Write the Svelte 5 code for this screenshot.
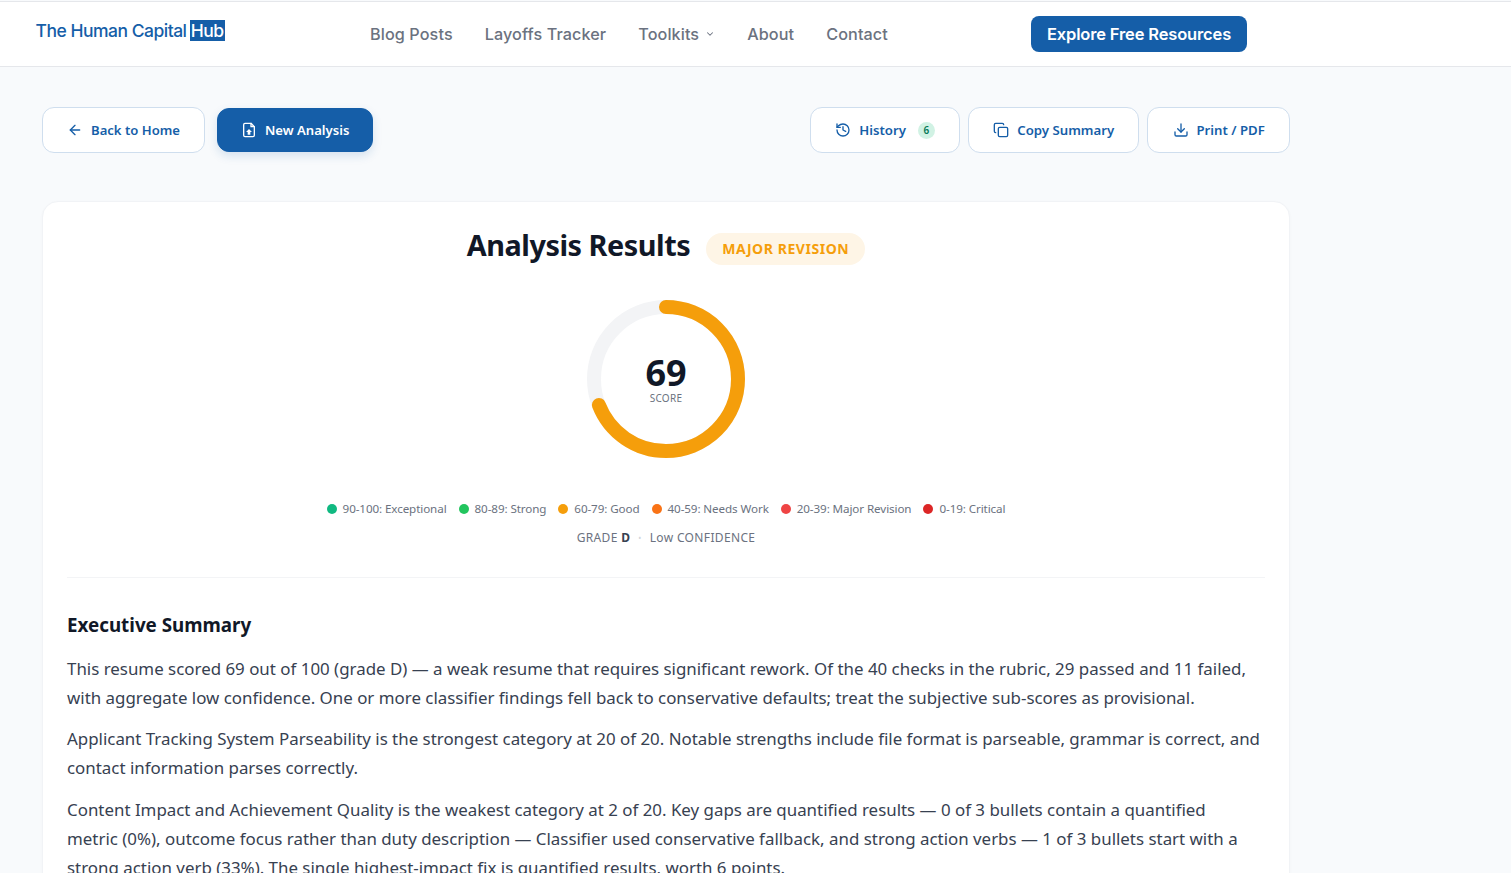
<script lang="ts">
	type Band = { label: string; color: string };

	const navLinks = ['Blog Posts', 'Layoffs Tracker', 'Toolkits', 'About', 'Contact'];

	const bands: Band[] = [
		{ label: '90-100: Exceptional', color: '#10b981' },
		{ label: '80-89: Strong', color: '#22c55e' },
		{ label: '60-79: Good', color: '#f59e0b' },
		{ label: '40-59: Needs Work', color: '#f97316' },
		{ label: '20-39: Major Revision', color: '#ef4444' },
		{ label: '0-19: Critical', color: '#dc2626' }
	];

	const score = 69;
	const radius = 72;
	const circumference = 2 * Math.PI * radius;
	const dash = (score / 100) * circumference;
</script>

<header class="site-header">
	<div class="logo">The Human Capital <span class="logo-hub">Hub</span></div>
	<nav class="site-nav">
		{#each navLinks as link}
			<a href="#top" class="nav-link">
				{link}
				{#if link === 'Toolkits'}
					<svg width="10" height="10" viewBox="0 0 24 24" fill="none" stroke="currentColor" stroke-width="2.5" stroke-linecap="round" stroke-linejoin="round"><path d="m6 9 6 6 6-6" /></svg>
				{/if}
			</a>
		{/each}
	</nav>
	<a href="#top" class="cta">Explore Free Resources</a>
</header>

<main class="page">
	<div class="toolbar">
		<div class="toolbar-group">
			<button class="btn">
				<svg class="icon" viewBox="0 0 24 24"><path d="M19 12H5" /><path d="m12 19-7-7 7-7" /></svg>
				Back to Home
			</button>
			<button class="btn primary">
				<svg class="icon" viewBox="0 0 24 24"><path d="M15 2H6a2 2 0 0 0-2 2v16a2 2 0 0 0 2 2h12a2 2 0 0 0 2-2V7z" /><path d="M15 2v5h5" /><path d="m12 10.5 4.5 4.5H14v4h-4v-4H7.500z" fill="currentColor" stroke="none" /></svg>
				New Analysis
			</button>
		</div>
		<div class="toolbar-group right">
			<button class="btn">
				<svg class="icon" viewBox="0 0 24 24"><path d="M3 12a9 9 0 1 0 9-9 9.75 9.75 0 0 0-6.74 2.74L3 8" /><path d="M3 3v5h5" /><path d="M12 7v5l4 2" /></svg>
				History
				<span class="count">6</span>
			</button>
			<button class="btn">
				<svg class="icon" viewBox="0 0 24 24"><rect x="8" y="8" width="14" height="14" rx="2" /><path d="M4 16c-1.100 0-2-.9-2-2V4c0-1.100.9-2 2-2h10c1.100 0 2 .9 2 2" /></svg>
				Copy Summary
			</button>
			<button class="btn">
				<svg class="icon" viewBox="0 0 24 24"><path d="M21 15v4a2 2 0 0 1-2 2H5a2 2 0 0 1-2-2v-4" /><path d="m7 10 5 5 5-5" /><path d="M12 15V3" /></svg>
				Print / PDF
			</button>
		</div>
	</div>

	<section class="card">
		<div class="title-row">
			<h1>Analysis Results</h1>
			<span class="verdict">MAJOR REVISION</span>
		</div>

		<div class="ring">
			<svg width="160" height="160" viewBox="0 0 160 160">
				<circle cx="80" cy="80" r={radius} fill="none" stroke="#f3f4f6" stroke-width="14" />
				<circle
					cx="80"
					cy="80"
					r={radius}
					fill="none"
					stroke="#f59e0b"
					stroke-width="14"
					stroke-linecap="round"
					stroke-dasharray="{dash} {circumference}"
					transform="rotate(-90 80 80)"
				/>
			</svg>
			<div class="ring-label">
				<span class="ring-score">{score}</span>
				<span class="ring-caption">SCORE</span>
			</div>
		</div>

		<ul class="legend">
			{#each bands as band}
				<li><span class="dot" style="background: {band.color}"></span>{band.label}</li>
			{/each}
		</ul>

		<div class="grade">
			<span>GRADE <strong>D</strong></span>
			<span class="sep">•</span>
			<span>Low CONFIDENCE</span>
		</div>

		<div class="summary">
			<h2>Executive Summary</h2>
			<p>This resume scored 69 out of 100 (grade D) — a weak resume that requires significant rework. Of the 40 checks in the rubric, 29 passed and 11 failed, with aggregate low confidence. One or more classifier findings fell back to conservative defaults; treat the subjective sub-scores as provisional.</p>
			<p>Applicant Tracking System Parseability is the strongest category at 20 of 20. Notable strengths include file format is parseable, grammar is correct, and contact information parses correctly.</p>
			<p class="last">Content Impact and Achievement Quality is the weakest category at 2 of 20. Key gaps are quantified results — 0 of 3 bullets contain a quantified metric (0%), outcome focus rather than duty description — Classifier used conservative fallback, and strong action verbs — 1 of 3 bullets start with a strong action verb (33%). The single highest-impact fix is quantified results, worth 6 points.</p>
		</div>
	</section>
</main>

<style>
	:global(html),
	:global(body) {
		height: 100%;
		overflow: hidden;
	}

	:global(body) {
		background: #f8fafc;
		font-family: 'Noto Sans', 'Open Sans', sans-serif;
		color: #111827;
	}

	.site-header {
		height: 64px;
		margin-top: 1px;
		background: #fff;
		border-top: 1px solid #e5e7eb;
		border-bottom: 1px solid #e5e7eb;
		display: flex;
		align-items: center;
		padding: 0 0 0 36px;
	}

	.logo {
		width: 334px;
		margin-top: -7px;
		margin-left: -0.5px;
		font-family: Inter, sans-serif;
		font-size: 17.5px;
		font-weight: 500;
		letter-spacing: -0.5px;
		color: #155ea8;
		white-space: nowrap;
	}

	.logo-hub {
		background: #155ea8;
		color: #fff;
		padding: 0 1px;
		margin-left: -1px;
	}

	.site-nav {
		display: flex;
		gap: 32px;
		width: 661px;
		margin-left: 0.5px;
	}

	.nav-link {
		font-family: Inter, sans-serif;
		font-size: 16.2px;
		font-weight: 500;
		letter-spacing: 0.1px;
		color: #6b7280;
		text-decoration: none;
		display: flex;
		align-items: center;
		gap: 6px;
	}

	.cta {
		background: #155ea8;
		color: #fff;
		font-family: Inter, sans-serif;
		font-size: 16.5px;
		font-weight: 600;
		letter-spacing: -0.15px;
		text-decoration: none;
		border-radius: 8px;
		height: 36px;
		width: 216px;
		display: flex;
		align-items: center;
		justify-content: center;
		margin-top: -1px;
	}

	.page {
		width: 1248px;
		margin-left: 42px;
		padding-top: 40px;
	}

	.toolbar {
		display: flex;
		justify-content: space-between;
		align-items: center;
		margin-bottom: 48px;
	}

	.toolbar-group {
		display: flex;
		gap: 12px;
		align-items: center;
	}

	.toolbar-group.right {
		gap: 8px;
	}

	.toolbar-group.right .btn {
		padding: 0 24.2px;
		font-size: 13.2px;
	}

	.btn {
		height: 46px;
		padding: 0 24px;
		background: #fff;
		border: 1px solid #cfdeee;
		border-radius: 12px;
		color: #155ea8;
		font-family: inherit;
		font-size: 13.1px;
		font-weight: 600;
		display: flex;
		align-items: center;
		gap: 8px;
	}

	.btn.primary {
		height: 44px;
		padding: 0 23px;
		background: #155ea8;
		border-color: #155ea8;
		color: #fff;
		box-shadow: 0 4px 10px rgba(21, 94, 168, 0.15);
	}

	.icon {
		width: 16px;
		height: 16px;
		fill: none;
		stroke: currentColor;
		stroke-width: 2;
		stroke-linecap: round;
		stroke-linejoin: round;
	}

	.count {
		width: 17px;
		height: 17px;
		border-radius: 50%;
		background: #d1f2e4;
		color: #047857;
		font-size: 10px;
		display: flex;
		align-items: center;
		justify-content: center;
		margin-left: 4px;
	}

	.card {
		background: #fff;
		border: 1px solid #f1f3f6;
		border-radius: 16px;
		padding: 20px 24px 32px;
		box-shadow: 0 1px 3px rgba(0, 0, 0, 0.03);
	}

	.title-row {
		display: flex;
		justify-content: center;
		align-items: center;
		gap: 16px;
		height: 44px;
	}

	h1 {
		margin: 0;
		font-size: 28.8px;
		font-weight: 700;
		letter-spacing: -0.45px;
		color: #111827;
	}

	.verdict {
		background: #fef5e6;
		color: #f59e0b;
		font-size: 14px;
		font-weight: 700;
		letter-spacing: 0.55px;
		padding: 0 16px 1px;
		height: 31px;
		border-radius: 16px;
		display: flex;
		align-items: center;
		margin-top: 10px;
	}

	.ring {
		position: relative;
		width: 160px;
		height: 160px;
		margin: 33px auto 0;
	}

	.ring-label {
		position: absolute;
		inset: 0;
		display: flex;
		flex-direction: column;
		align-items: center;
		justify-content: center;
	}

	.ring-score {
		font-size: 36px;
		font-weight: 700;
		line-height: 40px;
		color: #111827;
	}

	.ring-caption {
		font-size: 10px;
		line-height: 13px;
		margin-top: -1px;
		color: #6b7280;
		letter-spacing: 0.3px;
	}

	.legend {
		list-style: none;
		margin: 40px 0 0;
		padding: 0;
		display: flex;
		justify-content: center;
		gap: 12px;
		font-size: 11.65px;
		letter-spacing: -0.1px;
		line-height: 20px;
		color: #6b7280;
	}

	.legend li {
		display: flex;
		align-items: center;
		gap: 6px;
	}

	.dot {
		width: 10px;
		height: 10px;
		border-radius: 50%;
	}

	.grade {
		display: flex;
		justify-content: center;
		gap: 8px;
		margin-top: 9px;
		font-size: 12px;
		letter-spacing: 0.35px;
		line-height: 20px;
		color: #6b7280;
	}

	.grade strong {
		color: #374151;
	}

	.sep {
		color: #d1d5db;
		font-size: 8px;
	}

	.summary {
		margin-top: 29px;
		padding-top: 30px;
		border-top: 1px solid #f3f4f6;
	}

	h2 {
		margin: 0 0 12px;
		font-size: 18.8px;
		font-weight: 700;
		line-height: 34px;
		color: #111827;
	}

	p {
		margin: 0 0 12.4px;
		font-size: 16.9px;
		line-height: 29px;
		color: #374151;
	}

	p.last {
		max-width: 1188px;
	}
</style>
